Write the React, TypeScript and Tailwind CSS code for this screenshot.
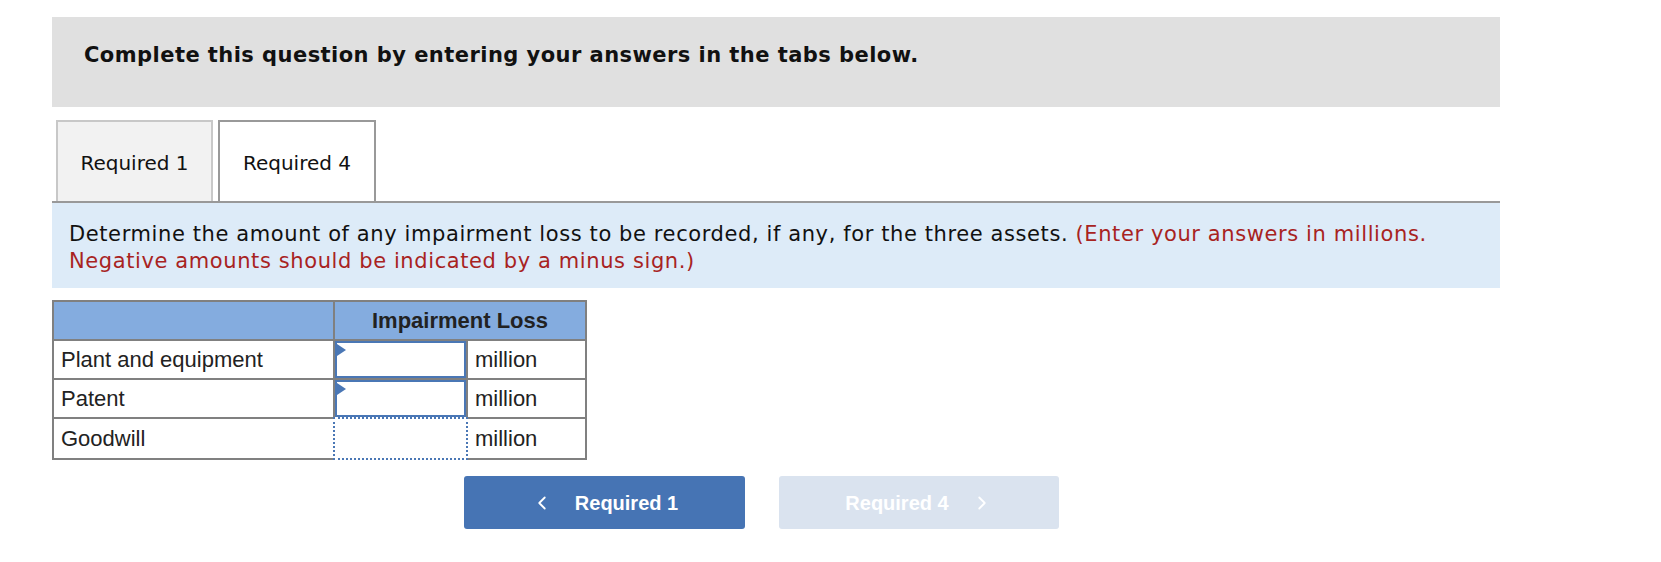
import { ChevronLeft, ChevronRight } from "lucide-react";

const rows = ["Plant and equipment", "Patent", "Goodwill"];

function AnswerCell({ index }: { index: number }) {
  if (index === 2) {
    return (
      <td className="relative p-0 border-2 border-[#808080] h-[41px]">
        <div className="absolute -inset-[2px] border-2 border-dotted border-[#4a77b5] bg-white" />
      </td>
    );
  }
  return (
    <td className="p-0 border-2 border-[#808080] h-[39px] align-top">
      <div className="relative h-[37px] border-2 border-[#4a77b5] bg-white">
        <div className="absolute left-0 top-[1px] w-0 h-0 border-y-[6px] border-y-transparent border-l-[9px] border-l-[#4a77b5]" />
      </div>
    </td>
  );
}

export default function App() {
  return (
    <div className="w-[1661px] h-[562px] bg-white pt-[17px] pl-[52px] font-['DejaVu_Sans',Verdana,sans-serif] text-[#111]">
      <div className="w-[1448px]">
        <div className="h-[90px] bg-[#e0e0e0] pl-[32px] pt-[26px]">
          <p className="text-[21px] leading-[24px] font-bold tracking-[0.45px]">
            Complete this question by entering your answers in the tabs below.
          </p>
        </div>

        <div className="mt-[13px] flex gap-[5px] pl-[4px] border-b-2 border-[#999]">
          <div className="w-[157px] h-[81px] pt-[3px] flex items-center justify-center bg-[#f2f2f2] border-2 border-b-0 border-[#c8c8c8] text-[20px]">
            Required 1
          </div>
          <div className="w-[158px] h-[81px] pt-[3px] flex items-center justify-center bg-white border-2 border-b-0 border-[#999] text-[20px]">
            Required 4
          </div>
        </div>

        <div className="h-[85px] bg-[#ddebf8] pl-[17px] pt-[18px] text-[21px] leading-[27px] tracking-[0.6px]">
          Determine the amount of any impairment loss to be recorded, if any, for the three assets.{" "}
          <span className="text-[#a8231f]">
            (Enter your answers in millions.
            <br />
            Negative amounts should be indicated by a minus sign.)
          </span>
        </div>

        <table className="mt-[12px] border-collapse table-fixed w-[533px] font-['Liberation_Sans',Arial,sans-serif] text-[22px] text-[#222]">
          <colgroup>
            <col className="w-[281px]" />
            <col className="w-[133px]" />
            <col className="w-[119px]" />
          </colgroup>
          <thead>
            <tr className="bg-[#84acdf]">
              <th className="h-[39px] border-2 border-[#808080]" />
              <th colSpan={2} className="h-[39px] border-2 border-[#808080] font-bold text-center">
                Impairment Loss
              </th>
            </tr>
          </thead>
          <tbody>
            {rows.map((label, i) => (
              <tr key={label}>
                <td className="h-[39px] border-2 border-[#808080] px-[7px] leading-none">
                  {label}
                </td>
                <AnswerCell index={i} />
                <td className="h-[39px] border-2 border-[#808080] px-[7px] leading-none">
                  million
                </td>
              </tr>
            ))}
          </tbody>
        </table>

        <div className="mt-[16px] ml-[412px] flex gap-[34px] font-['Liberation_Sans',Arial,sans-serif]">
          <button className="w-[281px] h-[53px] rounded-[3px] bg-[#4674b4] text-white text-[20px] font-bold flex items-center justify-center gap-[22px]">
            <ChevronLeft size={22} strokeWidth={2} />
            <span>Required 1</span>
          </button>
          <button className="w-[280px] h-[53px] rounded-[3px] bg-[#dae3ef] text-white text-[20px] font-bold flex items-center justify-center gap-[22px]">
            <span>Required 4</span>
            <ChevronRight size={22} strokeWidth={2} />
          </button>
        </div>
      </div>
    </div>
  );
}
